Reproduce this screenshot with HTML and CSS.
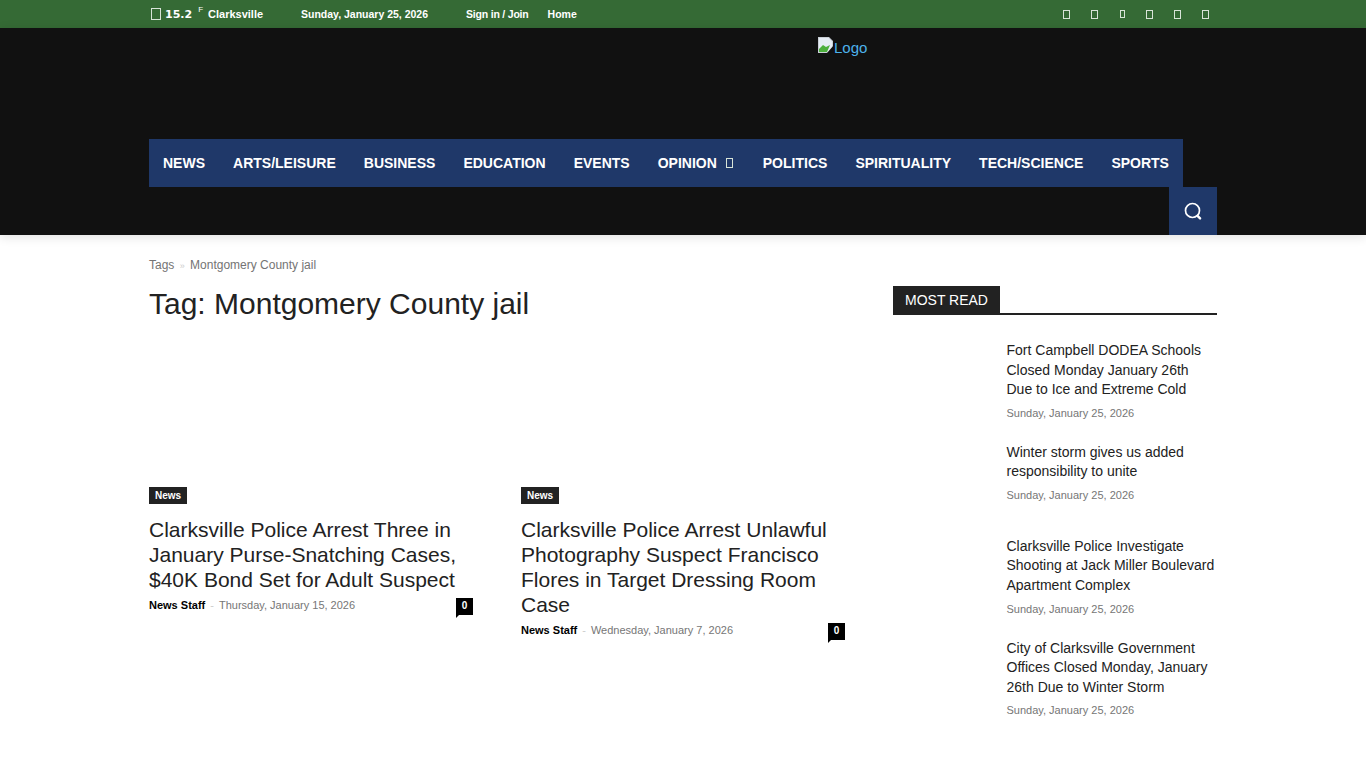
FILE: index.html
```html
<!DOCTYPE html>
<html lang="en">
<head>
  <meta charset="UTF-8" />
  <title>Montgomery County jail</title>
  <link rel="stylesheet" href="styles.css">
</head>
<body>

  <div class="topbar">
    <div class="wrap topbar-inner">
      <div class="weather">
        <span class="tofu tofu-weather"></span>
        <span class="temp">15.2</span>
        <span class="unit">F</span>
        <span class="city">Clarksville</span>
      </div>
      <span class="today">Sunday, January 25, 2026</span>
      <a class="toplink signin" href="#">Sign in / Join</a>
      <a class="toplink" href="#">Home</a>
      <div class="socials">
        <span class="tofu"></span>
        <span class="tofu"></span>
        <span class="tofu tofu-small"></span>
        <span class="tofu"></span>
        <span class="tofu"></span>
        <span class="tofu"></span>
      </div>
    </div>
  </div>

  <header class="header">
    <div class="wrap">
      <div class="logo-row">
        <a class="logo" href="#">
          <svg class="broken" width="16" height="16" viewBox="0 0 16 16">
            <path d="M0 0h11l4 4v12H0z" fill="#c9cfd6"/>
            <path d="M1 1h9.500L14 4.500V15H1z" fill="#e6edf4"/>
            <path d="M1 15v-3l4-4 3 2 4-2-3 7z" fill="#4caf3c"/>
            <path d="M9 16l7-8v8z" fill="#111"/>
          </svg>Logo
        </a>
      </div>
      <nav class="menu">
        <a href="#">NEWS</a>
        <a href="#">ARTS/LEISURE</a>
        <a href="#">BUSINESS</a>
        <a href="#">EDUCATION</a>
        <a href="#">EVENTS</a>
        <a href="#">OPINION <span class="tofu tofu-nav"></span></a>
        <a href="#">POLITICS</a>
        <a href="#">SPIRITUALITY</a>
        <a href="#">TECH/SCIENCE</a>
        <a href="#">SPORTS</a>
      </nav>
      <div class="search-row">
        <button class="search" aria-label="Search">
          <svg width="20" height="20" viewBox="0 0 20 20" fill="none" stroke="#fff">
            <circle cx="9.500" cy="9.500" r="7" stroke-width="1.700"/>
            <path d="M14.500 14.800l2.600 2.600" stroke-width="2.400" stroke-linecap="round"/>
          </svg>
        </button>
      </div>
    </div>
  </header>

  <div class="wrap content">
    <main class="main">
      <div class="crumbs">Tags <span class="crumb-sep">&raquo;</span> Montgomery County jail</div>
      <h1>Tag: Montgomery County jail</h1>
      <div class="cards">
        <article class="card">
          <span class="badge">News</span>
          <h3>Clarksville Police Arrest Three in January Purse-Snatching Cases, $40K Bond Set for Adult Suspect</h3>
          <div class="meta">
            <span class="author">News Staff</span>
            <span class="dash">-</span>
            <span class="date">Thursday, January 15, 2026</span>
            <span class="comments">0</span>
          </div>
        </article>
        <article class="card">
          <span class="badge">News</span>
          <h3>Clarksville Police Arrest Unlawful Photography Suspect Francisco Flores in Target Dressing Room Case</h3>
          <div class="meta">
            <span class="author">News Staff</span>
            <span class="dash">-</span>
            <span class="date">Wednesday, January 7, 2026</span>
            <span class="comments">0</span>
          </div>
        </article>
      </div>
    </main>

    <aside class="side">
      <div class="side-head"><span>MOST READ</span></div>
      <div class="side-item">
        <div class="thumb"></div>
        <div>
          <h4>Fort Campbell DODEA Schools Closed Monday January 26th Due to Ice and Extreme Cold</h4>
          <div class="date">Sunday, January 25, 2026</div>
        </div>
      </div>
      <div class="side-item">
        <div class="thumb"></div>
        <div>
          <h4>Winter storm gives us added responsibility to unite</h4>
          <div class="date">Sunday, January 25, 2026</div>
        </div>
      </div>
      <div class="side-item">
        <div class="thumb"></div>
        <div>
          <h4>Clarksville Police Investigate Shooting at Jack Miller Boulevard Apartment Complex</h4>
          <div class="date">Sunday, January 25, 2026</div>
        </div>
      </div>
      <div class="side-item">
        <div class="thumb"></div>
        <div>
          <h4>City of Clarksville Government Offices Closed Monday, January 26th Due to Winter Storm</h4>
          <div class="date">Sunday, January 25, 2026</div>
        </div>
      </div>
    </aside>
  </div>

</body>
</html>
```

FILE: styles.css
```css
* {
  box-sizing: border-box;
}
body {
  margin: 0;
  background: #fff;
  color: #111;
  font-family: "Liberation Sans", Arial, sans-serif;
}
a {
  color: inherit;
  text-decoration: none;
}
.wrap {
  width: 1068px;
  margin: 0 auto;
}

/* top bar */
.topbar {
  height: 28px;
  background: #356a35;
  color: #fff;
  font-size: 10.5px;
  font-weight: bold;
}
.topbar-inner {
  display: flex;
  align-items: center;
  height: 28px;
  padding-left: 2px;
}
.tofu {
  display: inline-block;
  width: 7px;
  height: 9px;
  border: 1px solid #d8e4d8;
}
.tofu-small {
  width: 5px;
  height: 8px;
  margin: 0 1px;
}
.tofu-weather {
  width: 10px;
  height: 12px;
  margin-right: 4px;
}
.tofu-nav {
  width: 7px;
  height: 10px;
  margin: 0 2px 0 5px;
}
.weather {
  display: flex;
  align-items: center;
  width: 150px;
  height: 28px;
}
.temp {
  font-family: "DejaVu Sans", sans-serif;
  font-size: 11px;
}
.unit {
  align-self: flex-start;
  margin: 5px 5px 0 6px;
  font-size: 8px;
  font-weight: normal;
}
.city {
  font-size: 11px;
}
.today {
  width: 165px;
}
.signin {
  margin-right: 19px;
  letter-spacing: -0.2px;
}
.socials {
  display: flex;
  align-items: center;
  gap: 20.8px;
  margin-left: auto;
  padding-right: 8px;
}

/* header */
.header {
  height: 207px;
  background: #111;
  box-shadow: 0 2px 10px rgba(0,0,0,0.12);
  position: relative;
}
.logo-row {
  height: 111px;
  padding: 9px 0 0 669px;
}
.logo {
  font-size: 15px;
  line-height: 19px;
  color: #4db2ec;
}
.broken {
  vertical-align: 0;
}
.menu {
  display: flex;
  justify-content: space-between;
  width: 1034px;
  height: 48px;
  background: #1f3869;
}
.menu a {
  padding: 0 14px;
  color: #fff;
  font-size: 14px;
  font-weight: bold;
  line-height: 48px;
  white-space: nowrap;
}
.search-row {
  display: flex;
  justify-content: flex-end;
}
.search {
  display: flex;
  align-items: center;
  justify-content: center;
  width: 48px;
  height: 48px;
  padding: 0;
  border: none;
  background: #1f3869;
}

/* content */
.content {
  display: flex;
  gap: 48px;
}
.main {
  width: 696px;
}
.crumbs {
  margin-top: 23px;
  color: #747474;
  font-size: 12px;
  line-height: 14px;
}
.crumb-sep {
  margin: 0 2px;
  color: #ccc;
  font-size: 9px;
}
h1 {
  margin: 13px 0 0;
  color: #222;
  font-size: 30px;
  font-weight: normal;
  line-height: 36px;
}
.cards {
  display: flex;
  gap: 48px;
  margin-top: 165px;
}
.card {
  width: 324px;
}
.badge {
  display: block;
  width: max-content;
  padding: 0 6px;
  background: #222;
  color: #fff;
  font-size: 10px;
  font-weight: bold;
  line-height: 17px;
}
.card h3 {
  margin: 13px 0 0;
  color: #222;
  font-size: 21px;
  font-weight: normal;
  line-height: 25px;
}
.meta {
  display: flex;
  align-items: flex-start;
  height: 17px;
  margin-top: 6px;
  font-size: 11px;
  line-height: 14px;
}
.author {
  color: #000;
  font-weight: bold;
}
.dash {
  margin: 0 5px;
  color: #ccc;
}
.date {
  color: #767676;
  font-size: 11px;
}
.comments {
  position: relative;
  margin-left: auto;
  width: 17px;
  height: 17px;
  background: #000;
  color: #fff;
  font-size: 10px;
  font-weight: bold;
  line-height: 16px;
  text-align: center;
}
.comments::after {
  content: "";
  position: absolute;
  left: 0;
  bottom: -3px;
  border-top: 3px solid #000;
  border-right: 3px solid transparent;
}

/* sidebar */
.side {
  width: 324px;
  padding-top: 51px;
}
.side-head {
  height: 29px;
  margin-bottom: 26px;
  border-bottom: 2px solid #222;
}
.side-head span {
  display: block;
  width: 107px;
  height: 28px;
  background: #222;
  color: #fff;
  font-size: 14px;
  line-height: 28px;
  text-align: center;
}
.side-item {
  display: flex;
  min-height: 70px;
  margin-bottom: 24px;
}
.thumb {
  flex: none;
  width: 113.5px;
}
.side-item h4 {
  margin: 0;
  color: #222;
  font-size: 14px;
  font-weight: normal;
  line-height: 19.6px;
}
.side-item .date {
  margin-top: 7px;
  line-height: 12px;
}
```
